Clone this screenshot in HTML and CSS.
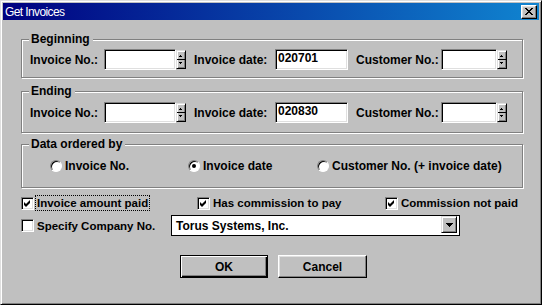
FILE: index.html
```html
<!DOCTYPE html>
<html lang="en">
<head>
    <meta charset="UTF-8">
    <title>Get Invoices</title>
    <link rel="stylesheet" href="styles.css">
</head>
<body>
    <div class="window">
        <div class="titlebar">
            <span class="title">Get Invoices</span>
            <span class="close-btn">
                <svg width="8" height="7" viewBox="0 0 8 7"><path d="M0 0h2v1H0zM6 0h2v1H6zM1 1h2v1H1zM5 1h2v1H5zM2 2h4v1H2zM3 3h2v1H3zM2 4h4v1H2zM1 5h2v1H1zM5 5h2v1H5zM0 6h2v1H0zM6 6h2v1H6z" fill="#000"/></svg>
            </span>
        </div>

        <div class="content">
            <div class="group group-begin">
                <div class="group-label">Beginning</div>
                <div class="field-row">
                    <span class="lbl lbl-inv">Invoice No.:</span>
                    <span class="textbox tb-inv"></span>
                    <span class="spin"><svg width="8" height="17" viewBox="0 0 8 17"><path d="M3 4h1v1H3zM2 5h3v1H2zM0 8h8v1H0zM2 11h3v1H2zM3 12h1v1H3z" fill="#000"/></svg></span>
                    <span class="lbl lbl-date">Invoice date:</span>
                    <span class="textbox tb-date">020701</span>
                    <span class="lbl lbl-cust">Customer No.:</span>
                    <span class="textbox tb-cust"></span>
                    <span class="spin"><svg width="8" height="17" viewBox="0 0 8 17"><path d="M3 4h1v1H3zM2 5h3v1H2zM0 8h8v1H0zM2 11h3v1H2zM3 12h1v1H3z" fill="#000"/></svg></span>
                </div>
            </div>

            <div class="group group-end">
                <div class="group-label">Ending</div>
                <div class="field-row">
                    <span class="lbl lbl-inv">Invoice No.:</span>
                    <span class="textbox tb-inv"></span>
                    <span class="spin"><svg width="8" height="17" viewBox="0 0 8 17"><path d="M3 4h1v1H3zM2 5h3v1H2zM0 8h8v1H0zM2 11h3v1H2zM3 12h1v1H3z" fill="#000"/></svg></span>
                    <span class="lbl lbl-date">Invoice date:</span>
                    <span class="textbox tb-date">020830</span>
                    <span class="lbl lbl-cust">Customer No.:</span>
                    <span class="textbox tb-cust"></span>
                    <span class="spin"><svg width="8" height="17" viewBox="0 0 8 17"><path d="M3 4h1v1H3zM2 5h3v1H2zM0 8h8v1H0zM2 11h3v1H2zM3 12h1v1H3z" fill="#000"/></svg></span>
                </div>
            </div>

            <div class="group group-order">
                <div class="group-label">Data ordered by</div>
                <div class="radio-row">
                    <span class="option opt-1"><span class="radio"></span>Invoice No.</span>
                    <span class="option opt-2"><span class="radio checked"></span>Invoice date</span>
                    <span class="option"><span class="radio"></span>Customer No. (+ invoice date)</span>
                </div>
            </div>

            <div class="check-row row-1">
                <span class="option chk-1">
                    <span class="checkbox"><svg width="7" height="7" viewBox="0 0 7 7"><path d="M6 0v3L2 7 0 5V2l2 2z" fill="#000"/></svg></span>
                    <span class="check-label focus">Invoice amount paid</span>
                </span>
                <span class="option chk-2">
                    <span class="checkbox"><svg width="7" height="7" viewBox="0 0 7 7"><path d="M6 0v3L2 7 0 5V2l2 2z" fill="#000"/></svg></span>
                    <span class="check-label">Has commission to pay</span>
                </span>
                <span class="option">
                    <span class="checkbox"><svg width="7" height="7" viewBox="0 0 7 7"><path d="M6 0v3L2 7 0 5V2l2 2z" fill="#000"/></svg></span>
                    <span class="check-label">Commission not paid</span>
                </span>
            </div>

            <div class="check-row row-2">
                <span class="option chk-company">
                    <span class="checkbox"></span>
                    <span class="check-label">Specify Company No.</span>
                </span>
                <span class="combo">
                    <span class="combo-text">Torus Systems, Inc.</span>
                    <span class="combo-btn"><svg width="7" height="4" viewBox="0 0 7 4"><path d="M0 0h7v1H0zM1 1h5v1H1zM2 2h3v1H2zM3 3h1v1H3z" fill="#000"/></svg></span>
                </span>
            </div>

            <div class="btn-row">
                <span class="btn btn-default">OK</span>
                <span class="btn btn-cancel">Cancel</span>
            </div>
        </div>
    </div>
</body>
</html>
```

FILE: styles.css
```css
* {
    box-sizing: border-box;
}
body {
    margin: 0;
    background: #c0c0c0;
    font-family: "Liberation Sans", Arial, sans-serif;
    font-size: 12px;
    font-weight: bold;
    color: #000;
}
.window {
    width: 542px;
    height: 305px;
    padding: 2px;
    background: #c0c0c0;
    border: 1px solid;
    border-color: #dfdfdf #000 #000 #dfdfdf;
    box-shadow: inset 1px 1px #fff, inset -1px -1px #808080;
}
.titlebar {
    height: 17px;
    display: flex;
    align-items: center;
    justify-content: space-between;
    padding: 0 2px;
    background: linear-gradient(to right, #000080, #1084d0);
}
.title {
    color: #fff;
    font-weight: normal;
    font-size: 12px;
    letter-spacing: -0.6px;
}
.close-btn {
    width: 16px;
    height: 14px;
    display: flex;
    align-items: center;
    justify-content: center;
    background: #c0c0c0;
    border: 1px solid;
    border-color: #fff #000 #000 #fff;
    box-shadow: inset -1px -1px #808080, inset 1px 1px #dfdfdf;
}
.content {
    padding: 19px 0 0 18px;
}

/* group boxes */
.group {
    width: 502px;
    padding: 0 0 7px 8px;
    border: 1px solid #808080;
    box-shadow: inset 1px 1px #fff, 1px 1px #fff;
}
.group-label {
    display: table;
    height: 14px;
    line-height: 14px;
    margin: -8px 0 0 -1px;
    padding: 0 3px 0 2px;
    background: #c0c0c0;
}
.group-end {
    margin-top: 13px;
    padding-bottom: 9px;
}
.group-order {
    margin-top: 11px;
    padding-bottom: 14px;
}
.field-row {
    display: flex;
    align-items: center;
    height: 21px;
    margin-top: 3px;
}
.group-end .field-row {
    margin-top: 4px;
}
.lbl {
    white-space: nowrap;
}
.lbl-inv { width: 74px; }
.lbl-date { width: 81px; margin-left: 8px; }
.lbl-cust { width: 85px; margin-left: 8px; }
.textbox {
    height: 21px;
    padding-left: 2px;
    line-height: 17px;
    background: #fff;
    border: 1px solid;
    border-color: #808080 #fff #fff #808080;
    box-shadow: inset 1px 1px #000, inset -1px -1px #dfdfdf;
}
.tb-inv { width: 72px; }
.tb-date { width: 73px; }
.tb-cust { width: 56px; }
.spin {
    width: 10px;
    height: 19px;
    display: flex;
    background: #c0c0c0;
    border: 1px solid;
    border-color: #dfdfdf #000 #000 #dfdfdf;
    box-shadow: inset 1px 1px #fff, inset -1px -1px #808080;
}

/* radios */
.radio-row {
    display: flex;
    align-items: center;
    height: 14px;
    margin-top: 8px;
    padding-left: 20px;
}
.option {
    display: flex;
    align-items: center;
    white-space: nowrap;
}
.opt-1 { width: 138px; }
.opt-2 { width: 129px; }
.radio {
    width: 12px;
    height: 12px;
    margin-right: 3px;
    display: flex;
    align-items: center;
    justify-content: center;
    border-radius: 50%;
    background: #fff;
    border: 1px solid;
    border-color: #808080 #fff #fff #808080;
    box-shadow: inset 1px 1px #000;
}
.radio.checked::after {
    content: "";
    width: 4px;
    height: 4px;
    border-radius: 50%;
    background: #000;
}

/* checkboxes */
.check-row {
    display: flex;
    align-items: center;
}
.row-1 {
    height: 16px;
    margin-top: 7px;
}
.row-2 {
    height: 21px;
    margin-top: 4px;
}
.chk-1 { width: 176px; }
.chk-2 { width: 188px; }
.chk-company { width: 150px; }
.checkbox {
    width: 13px;
    height: 13px;
    display: flex;
    align-items: center;
    justify-content: center;
    background: #fff;
    border: 1px solid;
    border-color: #808080 #fff #fff #808080;
    box-shadow: inset 1px 1px #000, inset -1px -1px #dfdfdf;
}
.check-label {
    margin-left: 1px;
    padding: 0 1px;
    font-size: 11.5px;
    line-height: 14px;
    border: 1px solid transparent;
}
.check-label.focus {
    border: 1px dotted #000;
}

/* combo */
.combo {
    width: 289px;
    height: 21px;
    display: flex;
    align-items: center;
    padding-left: 4px;
    background: #fff;
    border: 1px solid #000;
}
.combo-btn {
    width: 16px;
    height: 17px;
    margin: 0 2px 0 auto;
    align-self: flex-start;
    display: flex;
    align-items: center;
    justify-content: center;
    background: #c0c0c0;
    border: 1px solid;
    border-color: #dfdfdf #000 #000 #dfdfdf;
    box-shadow: inset 1px 1px #fff, inset -1px -1px #808080;
}

/* buttons */
.btn-row {
    display: flex;
    margin-top: 19px;
    padding-left: 159px;
}
.btn {
    height: 23px;
    display: flex;
    align-items: center;
    justify-content: center;
    background: #c0c0c0;
    border: 1px solid;
    border-color: #fff #000 #000 #fff;
    box-shadow: inset -1px -1px #808080, inset 1px 1px #dfdfdf;
}
.btn-default {
    width: 88px;
    border-color: #000;
    box-shadow: inset 1px 1px #fff, inset -1px -1px #000, inset -2px -2px #808080;
}
.btn-cancel {
    width: 89px;
    margin-left: 10px;
}
```
